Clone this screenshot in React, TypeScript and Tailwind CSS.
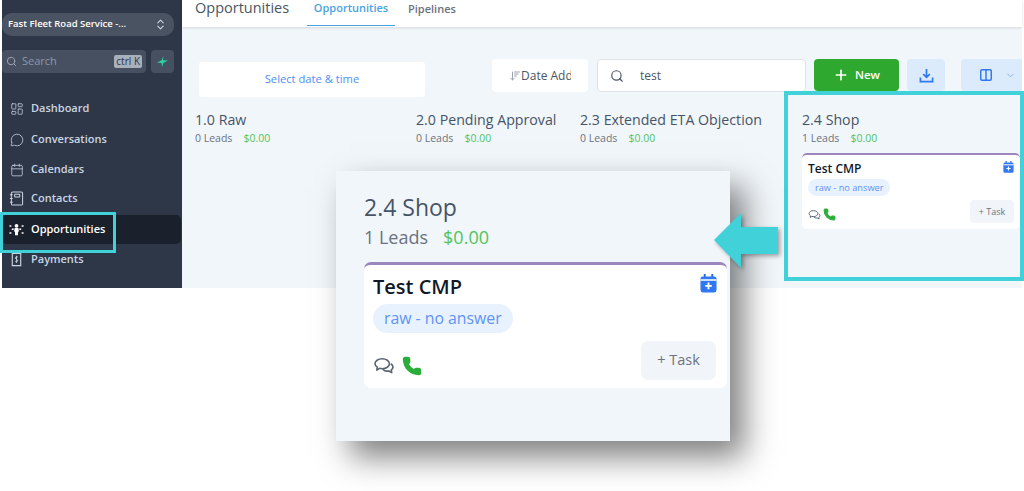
import { ChevronDown, ChevronsUpDown, Columns2, LayoutDashboard, MessageCircle, Calendar, Phone, Plus, Search, ArrowDownWideNarrow } from "lucide-react";
import type { ReactNode } from "react";

const font = "font-['Open_Sans',sans-serif]";

// Filled calendar with a plus, used on the lead card
function CalendarPlusIcon({ className }: { className: string }) {
  return (
    <svg viewBox="0 0 18 20" className={className}>
      <path d="M4 0h2v3H4zM12 0h2v3h-2z" fill="#2563eb" />
      <rect x="0.5" y="2.5" width="17" height="17" rx="2.5" fill="#2f78f2" />
      <rect x="0.5" y="5.5" width="17" height="1.6" fill="#fff" />
      <path d="M8 9h2v2.5h2.5v2H10V16H8v-2.500H5.500v-2H8z" fill="#fff" />
    </svg>
  );
}

function ChatIcon({ className }: { className: string }) {
  return (
    <svg viewBox="0 0 24 20" className={className} fill="none" stroke="#5b6472" strokeWidth="1.8" strokeLinejoin="round">
      <path d="M10 2c4.600 0 8 2.400 8 5.500S14.600 13 10 13c-1 0-2-.1-2.800-.4L4 14.500l.6-3.200C3 10.300 2 9 2 7.500 2 4.400 5.400 2 10 2z" />
      <path d="M19.500 7.500c1.600.9 2.500 2.200 2.500 3.600 0 1.300-.7 2.400-1.900 3.200l.5 3-3.200-1.800c-2.800.4-5.400-.4-6.700-2" />
    </svg>
  );
}

function OpportunitiesIcon() {
  return (
    <svg viewBox="0 0 16 16" className="w-[15px] h-[15px]" fill="#fff">
      <circle cx="8" cy="4" r="2" />
      <path d="M6 6.500h4l.6 3.500-1 .5V14H6.400v-3.500l-1-.5z" />
      <path d="M0.500 3.500h2v1.500h-2zM13.500 3.500h2v1.500h-2zM3 7h2v1.500H3zM11 7h2v1.500h-2zM0.500 11h2v1.500h-2zM13.500 11h2v1.500h-2z" />
    </svg>
  );
}

function ContactsIcon() {
  return (
    <svg viewBox="0 0 16 16" className="w-[15px] h-[15px]" fill="none" stroke="#cbd5e1" strokeWidth="1.100">
      <rect x="2.500" y="1" width="12" height="14" rx="1.500" />
      <rect x="6" y="3.500" width="5.500" height="3" rx="0.800" />
      <path d="M1 4h3M1 8h3M1 12h3" />
    </svg>
  );
}

function PaymentsIcon() {
  return (
    <svg viewBox="0 0 16 16" className="w-[15px] h-[15px]" fill="none" stroke="#cbd5e1" strokeWidth="1.200">
      <path d="M3.500 1.500h9v13h-9z" />
      <path d="M9.500 5.500C9 5 7 4.800 6.800 6.200 6.700 8 9.400 7.500 9.300 9.300 9.100 10.800 7 10.500 6.400 10M8 4v7.500" strokeWidth="0.900" />
    </svg>
  );
}

function NavItem({ icon, label, active, className }: { icon: ReactNode; label: string; active?: boolean; className: string }) {
  return (
    <div
      className={`flex items-center gap-[7px] pl-[7px] text-[11px] font-semibold rounded-[5px] h-[29px] ${className} ${
        active ? "bg-[#1a202c] text-white" : "text-[#cbd5e1]"
      }`}
    >
      <span className="w-[15px] flex justify-center">{icon}</span>
      {label}
    </div>
  );
}

function ColumnHead({ title, leads, className }: { title: string; leads: string; className: string }) {
  return (
    <div className={className}>
      <div className="text-[14.2px] leading-[20px] text-[#475467] whitespace-nowrap">{title}</div>
      <div className="text-[10.5px] leading-[16px] mt-[0px] text-[#6b7280] flex gap-[11px]">
        <span>{leads}</span>
        <span className="text-[#52c45a]">$0.00</span>
      </div>
    </div>
  );
}

export default function App() {
  return (
    <div className={`${font} relative w-[1024px] h-[491px] bg-white overflow-hidden`}>
      <div className="flex h-[288px] pl-[2px] pr-[2px]">
        {/* Sidebar */}
        <aside className="w-[180px] shrink-0 bg-[#2d3748] pr-[8px] pt-[13px]">
          <div className="h-[23px] rounded-[10px] bg-[#4a5361] flex items-center justify-between pl-[6px] pr-[7px] text-white text-[9.5px] font-semibold">
            <span>Fast Fleet Road Service -...</span>
            <ChevronsUpDown className="w-[13px] h-[13px] text-[#cbd5e1]" />
          </div>
          <div className="flex gap-[5px] mt-[14px]">
            <div className="w-[144px] h-[23px] rounded-[4px] bg-[#475060] flex items-center pl-[4px] pr-[4px]">
              <Search className="w-[11px] h-[11px] text-[#a3adba]" />
              <span className="ml-[5px] text-[11px] text-[#8d97a5]">Search</span>
              <span className="ml-auto px-[2px] rounded-[2px] bg-[#a8b0bb] text-[#2d3748] text-[10px] leading-[13px]">ctrl K</span>
            </div>
            <div className="w-[23px] h-[23px] rounded-[4px] bg-[#475060] flex items-center justify-center">
              <svg viewBox="0 0 12 12" className="w-[11px] h-[11px]">
                <path d="M7 0 6.500 4.500 12 5 7 7.500 5.500 12 5 7.500 0 7l5-2.500z" fill="#2dd4a0" />
              </svg>
            </div>
          </div>
          <nav className="mt-[21px] w-[179px]">
            <NavItem icon={<LayoutDashboard className="w-[14px] h-[14px]" strokeWidth={1.300} />} label="Dashboard" className="mb-[2px]" />
            <NavItem icon={<MessageCircle className="w-[14px] h-[14px]" strokeWidth={1.300} />} label="Conversations" className="mb-[1px]" />
            <NavItem icon={<Calendar className="w-[14px] h-[14px]" strokeWidth={1.300} />} label="Calendars" className="mb-[0px]" />
            <NavItem icon={<ContactsIcon />} label="Contacts" className="mb-[2px]" />
            <NavItem icon={<OpportunitiesIcon />} label="Opportunities" active className="mb-[1px]" />
            <NavItem icon={<PaymentsIcon />} label="Payments" className="" />
          </nav>
        </aside>

        {/* Main board */}
        <main className="flex-1 min-w-0 bg-[#f1f6fa] flex flex-col">
          <header className="h-[27px] bg-white shadow-[0_1px_3px_rgba(0,0,0,0.12)] flex pl-[13px]">
            <div className="text-[14.5px] leading-[16px] text-[#4b5563] w-[112px]">Opportunities</div>
            <div className="w-[88px] h-[26px] border-b border-[#4aa3e0] text-center text-[11px] leading-[16px] font-semibold text-[#4aa3e0]">
              Opportunities
            </div>
            <div className="ml-[13px] text-[11px] leading-[18px] font-semibold text-[#6b7280]">Pipelines</div>
          </header>

          <div className="flex items-start pl-[17px] pt-[32px]">
            <div className="w-[226px] h-[35px] mt-[3px] rounded-[3px] bg-white flex items-center justify-center text-[11.2px] text-[#4f8ff7]">
              Select date &amp; time
            </div>
            <div className="ml-[67px] w-[96px] h-[33px] rounded-[4px] bg-white flex items-center pl-[17px] text-[12px] text-[#4b5563] overflow-hidden whitespace-nowrap">
              <ArrowDownWideNarrow className="w-[12px] h-[12px] text-[#9ca3af] shrink-0" />
              <span className="w-[50px] overflow-hidden">Date Added</span>
            </div>
            <div className="ml-[9px] w-[209px] h-[33px] rounded-[4px] bg-white border border-[#dfe3e8] flex items-center pl-[12px] text-[12px] text-[#4b5563]">
              <Search className="w-[14px] h-[14px] text-[#4b5563]" />
              <span className="ml-[16px]">test</span>
            </div>
            <div className="ml-[8px] w-[85px] h-[32px] rounded-[4px] bg-[#2ea82e] flex items-center justify-center gap-[6px] text-white text-[11.5px] font-semibold">
              <Plus className="w-[16px] h-[16px]" strokeWidth={2.500} />
              New
            </div>
            <div className="ml-[8px] w-[38px] h-[32px] rounded-[4px] bg-[#dcebfb] flex items-center justify-center">
              <svg viewBox="0 0 16 16" className="w-[15px] h-[15px]" fill="none" stroke="#2f78f2" strokeWidth="1.800">
                <path d="M8 1v9M4.500 6.500 8 10l3.500-3.500M1.500 10v4.500h13V10" />
              </svg>
            </div>
            <div className="ml-[16px] w-[61px] h-[32px] rounded-l-[4px] bg-[#dcebfb] flex items-center pl-[18px] gap-[12px]">
              <Columns2 className="w-[14px] h-[14px] text-[#2f78f2]" strokeWidth={2.500} />
              <ChevronDown className="w-[11px] h-[11px] text-[#7fb0f0]" />
            </div>
          </div>

          <div className="flex pl-[13px] pt-[13px]">
            <ColumnHead title="1.0 Raw" leads="0 Leads" className="w-[221px]" />
            <ColumnHead title="2.0 Pending Approval" leads="0 Leads" className="w-[164px]" />
            <ColumnHead title="2.3 Extended ETA Objection" leads="0 Leads" className="w-[222px]" />
            <div className="w-[218px]">
              <ColumnHead title="2.4 Shop" leads="1 Leads" className="" />
              <div className="mt-[7px] h-[76px] rounded-[5px] bg-white border-t-2 border-[#9d86bd] pl-[6px] pr-[6px] pt-[6px]">
                <div className="flex justify-between items-start">
                  <span className="text-[12px] leading-[16px] font-semibold text-[#111827]">Test CMP</span>
                  <CalendarPlusIcon className="w-[11px] h-[12px] mr-[0px]" />
                </div>
                <div className="w-fit mt-[2px] px-[7px] h-[17px] rounded-full bg-[#e8f2ff] text-[9.2px] leading-[17px] text-[#5f93f5]">
                  raw - no answer
                </div>
                <div className="flex items-center justify-between mt-[4px]">
                  <div className="flex items-center gap-[2px] mt-[6px]">
                    <ChatIcon className="w-[13px] h-[12px]" />
                    <Phone className="w-[13px] h-[13px] text-[#2aae3a] fill-[#2aae3a]" />
                  </div>
                  <div className="w-[44px] h-[23px] rounded-[4px] bg-[#f1f5f9] text-[9px] leading-[23px] text-center text-[#6b7280] font-medium">
                    + Task
                  </div>
                </div>
              </div>
            </div>
          </div>
        </main>
      </div>

      {/* Highlight frames */}
      <div className="absolute left-0 top-[212px] w-[116px] h-[41px] border-[3px] border-[#40d1d9]" />
      <div className="absolute left-[784px] top-[91px] w-[240px] h-[190px] border-[4px] border-[#40d1d9]" />

      {/* Enlarged callout of the Shop column */}
      <div className="absolute left-[336px] top-[171px] w-[394px] h-[270px] bg-[#f1f6fa] shadow-[14px_16px_30px_rgba(0,0,0,0.5)] pl-[28px] pr-[3px] pt-[22px]">
        <div className="text-[23px] leading-[28px] text-[#475467]">2.4 Shop</div>
        <div className="text-[18px] leading-[24px] mt-[4px] text-[#6b7280] flex gap-[15px]">
          <span>1 Leads</span>
          <span className="text-[#52c45a]">$0.00</span>
        </div>
        <div className="mt-[13px] h-[126px] rounded-[7px] bg-white border-t-[3px] border-[#9d86bd] pl-[9px] pr-[10px] pt-[8px]">
          <div className="flex justify-between items-start">
            <span className="text-[20px] leading-[27px] font-semibold text-[#111827]">Test CMP</span>
            <CalendarPlusIcon className="w-[17px] h-[19px] mt-[1px]" />
          </div>
          <div className="w-fit mt-[4px] px-[11px] h-[29px] rounded-full bg-[#e8f2ff] text-[15.8px] leading-[28px] text-[#5f93f5]">
            raw - no answer
          </div>
          <div className="flex items-center justify-between mt-[8px] pr-[1px]">
            <div className="flex items-center gap-[7px] mt-[10px]">
              <ChatIcon className="w-[22px] h-[18px]" />
              <Phone className="w-[20px] h-[20px] text-[#2aae3a] fill-[#2aae3a]" />
            </div>
            <div className="w-[75px] h-[39px] rounded-[7px] bg-[#f1f5f9] text-[14.5px] leading-[38px] text-center text-[#6b7280] font-medium">
              + Task
            </div>
          </div>
        </div>
      </div>

      {/* Arrow from the column to the callout */}
      <svg viewBox="0 0 70 60" className="absolute left-[713px] top-[212px] w-[70px] h-[60px] drop-shadow-[2px_2px_2px_rgba(0,0,0,0.35)]">
        <path d="M1 28 28 1v14h37v27H28v14z" fill="#40d1d9" />
      </svg>
    </div>
  );
}
